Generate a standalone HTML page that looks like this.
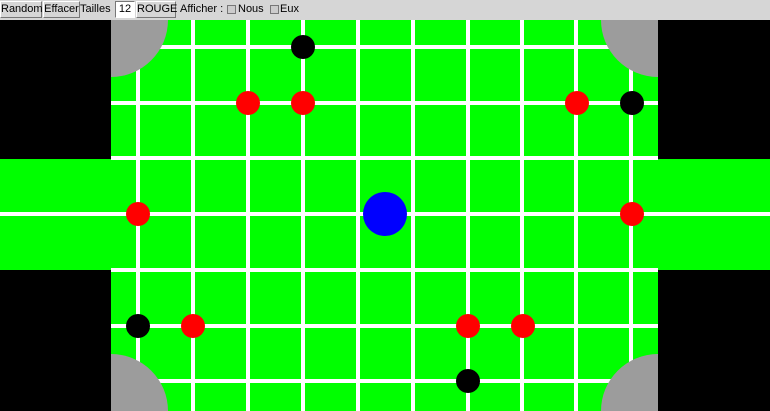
<!DOCTYPE html>
<html><head><meta charset="utf-8"><style>
html,body{margin:0;width:770px;height:411px;overflow:hidden;background:#000;font-family:"Liberation Sans",sans-serif;font-size:11px}
#bar{position:absolute;left:0;top:0;width:770px;height:20px;background:#d6d6d6}
.b{position:absolute;top:1px;height:17px;border:1px solid #fff;border-right-color:#777;border-bottom-color:#777;background:#d6d6d6;line-height:15px;text-align:center;box-sizing:border-box;color:#000}
.t{position:absolute;top:3px;color:#000}
.cb{position:absolute;top:5px;width:9px;height:9px;border:1px solid #777;background:#ccc;box-sizing:border-box}
svg{position:absolute;left:0;top:20px;display:block}
</style></head><body>
<div id="bar">
<div class="b" style="left:0;width:42px">Random</div>
<div class="b" style="left:43px;width:37px">Effacer</div>
<div class="t" style="left:80px">Tailles</div>
<div class="b" style="left:115px;width:20px;background:#fff;border-color:#777 #fff #fff #777">12</div>
<div class="b" style="left:136px;width:40px">ROUGE</div>
<div class="t" style="left:180px">Afficher :</div>
<div class="cb" style="left:227px"></div><div class="t" style="left:238px">Nous</div>
<div class="cb" style="left:270px"></div><div class="t" style="left:280px">Eux</div>
</div>
<svg width="770" height="391" viewBox="0 20 770 391">
<rect x="0" y="20" width="770" height="391" fill="#000"/>
<rect x="111" y="20" width="547" height="391" fill="#00ff00"/>
<rect x="0" y="159" width="770" height="111" fill="#00ff00"/>
<g stroke="#fff" stroke-width="4">
<line x1="138" y1="20" x2="138" y2="411"/><line x1="193" y1="20" x2="193" y2="411"/>
<line x1="248" y1="20" x2="248" y2="411"/><line x1="303" y1="20" x2="303" y2="411"/>
<line x1="358" y1="20" x2="358" y2="411"/><line x1="413" y1="20" x2="413" y2="411"/>
<line x1="468" y1="20" x2="468" y2="411"/><line x1="522" y1="20" x2="522" y2="411"/>
<line x1="576" y1="20" x2="576" y2="411"/><line x1="631" y1="20" x2="631" y2="411"/>
<line x1="111" y1="47" x2="658" y2="47"/><line x1="111" y1="103" x2="658" y2="103"/>
<line x1="111" y1="158" x2="658" y2="158"/><line x1="0" y1="214" x2="770" y2="214"/>
<line x1="111" y1="270" x2="658" y2="270"/><line x1="111" y1="326" x2="658" y2="326"/>
<line x1="111" y1="381" x2="658" y2="381"/>
</g>
<path d="M111 20 h57 a57 57 0 0 1 -57 57z" fill="#9c9c9c"/>
<path d="M658 20 h-57 a57 57 0 0 0 57 57z" fill="#9c9c9c"/>
<path d="M111 411 h57 a57 57 0 0 0 -57 -57z" fill="#9c9c9c"/>
<path d="M658 411 h-57 a57 57 0 0 1 57 -57z" fill="#9c9c9c"/>
<rect x="0" y="20" width="111" height="139" fill="#000"/>
<rect x="0" y="270" width="111" height="141" fill="#000"/>
<rect x="659" y="20" width="111" height="139" fill="#000"/>
<rect x="659" y="270" width="111" height="141" fill="#000"/>
<g fill="#f00">
<circle cx="248" cy="103" r="12"/><circle cx="303" cy="103" r="12"/><circle cx="577" cy="103" r="12"/>
<circle cx="138" cy="214" r="12"/><circle cx="632" cy="214" r="12"/>
<circle cx="193" cy="326" r="12"/><circle cx="468" cy="326" r="12"/><circle cx="523" cy="326" r="12"/>
</g>
<g fill="#000">
<circle cx="303" cy="47" r="12"/><circle cx="632" cy="103" r="12"/>
<circle cx="138" cy="326" r="12"/><circle cx="468" cy="381" r="12"/>
</g>
<circle cx="385" cy="214" r="22" fill="#0000ff"/>
</svg>
</body></html>
